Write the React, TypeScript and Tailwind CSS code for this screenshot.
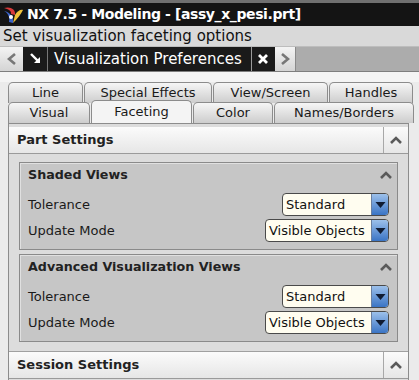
import React from "react";

const font = { fontFamily: '"DejaVu Sans", "Liberation Sans", sans-serif' };

const Chevron = () => (
  <svg width="14" height="10" viewBox="0 0 14 10">
    <path d="M2 8 L7 3 L12 8" fill="none" stroke="#5a5a5a" strokeWidth="2.6" />
  </svg>
);

const NxLogo = () => (
  <svg width="22" height="20" viewBox="0 0 22 20">
    <path d="M2 3 C8 1 14 4 13 10 L9 9 C10 6 6 4 2 3 Z" fill="#d83a3a" />
    <path d="M2 6 C6 8 8 12 7 17 L11 18 C12 12 8 7 2 6 Z" fill="#3b63c9" />
    <path d="M13 10 C15 6 19 4 21 5 C19 9 16 13 11 18 Z" fill="#f0c23a" />
    <circle cx="9" cy="12" r="2" fill="#ffffff" />
  </svg>
);

const Select = ({ label, width }: { label: string; width: string }) => (
  <div
    className={`flex h-[23px] ${width} items-stretch overflow-hidden rounded-[4px] border border-[#4a4a4a] bg-[#fffdf0]`}
  >
    <div className="flex flex-1 items-center whitespace-nowrap pl-[3px] text-[13px] text-[#111]">{label}</div>
    <div className="flex w-[17px] items-center justify-center border-l border-[#6a7fa0] bg-gradient-to-b from-[#9cc0ea] to-[#3a74c4]">
      <svg width="11" height="8" viewBox="0 0 11 8">
        <path d="M0.5 1 L10.5 1 L5.5 7 Z" fill="#101c33" />
      </svg>
    </div>
  </div>
);

const Row = ({ label, select, width }: { label: string; select: string; width: string }) => (
  <div className="flex h-[23px] items-center justify-between pl-[8px] pr-[8px]">
    <span className="whitespace-nowrap text-[13px] text-[#1a1a1a]">{label}</span>
    <Select label={select} width={width} />
  </div>
);

// collapsible group box inside a section
const Group = ({ title }: { title: string }) => (
  <div className="mx-[10px] border border-[#8a8a8a] bg-[#c6c6c6] shadow-[inset_1px_1px_0_#e0e0e0]">
    <div className="flex h-[23px] items-center justify-between pl-[8px] pr-[4px] pt-[1px]">
      <span className="whitespace-nowrap text-[12.7px] font-bold text-[#222]">{title}</span>
      <Chevron />
    </div>
    <div className="flex flex-col gap-[3px] pb-[7px] pt-[7px]">
      <Row label="Tolerance" select="Standard" width="w-[107px]" />
      <Row label="Update Mode" select="Visible Objects" width="w-[124px]" />
    </div>
  </div>
);

const SectionHeader = ({ title }: { title: string }) => (
  <div className="flex h-[27px] items-stretch border-b border-[#9a9a9a] bg-gradient-to-b from-[#fbfbfb] to-[#e6e6e6]">
    <div className="flex flex-1 items-center whitespace-nowrap pl-[8px] text-[13px] font-bold text-[#222]">
      {title}
    </div>
    <div className="flex w-[25px] items-center justify-center border-l border-[#a8a8a8]">
      <Chevron />
    </div>
  </div>
);

const Tab = ({ label, w, active }: { label: string; w: string; active?: boolean }) => (
  <div
    className={`flex ${w} shrink-0 items-center justify-center whitespace-nowrap rounded-t-[5px] border border-b-0 border-[#8c8c8c] text-[13px] text-[#1a1a1a] ${
      active ? "h-[23px] bg-[#f4f4f4]" : "h-[21px] bg-gradient-to-b from-[#f6f6f6] to-[#cdcdcd]"
    }`}
  >
    {label}
  </div>
);

export default function App() {
  return (
    <div className="h-[380px] w-[419px] overflow-hidden bg-[#ebebeb]" style={font}>
      <div className="flex h-[26px] items-center gap-[3px] border-t-[3px] border-[#707070] bg-[#141414] pl-[2px]">
        <NxLogo />
        <span className="whitespace-nowrap text-[14px] font-bold tracking-[-0.4px] text-white">
          NX 7.5 - Modeling - [assy_x_pesi.prt]
        </span>
      </div>
      <div className="flex h-[21px] items-center border-b border-[#bdbdbd] bg-[#d9d9d9] pl-[3px] text-[15px] text-[#111]">
        <span className="whitespace-nowrap">Set visualization faceting options</span>
      </div>
      <div className="flex h-[25px] items-stretch border-b border-[#7e7e7e] bg-[#acacac]">
        <div className="flex w-[23px] items-center justify-center bg-gradient-to-b from-[#f4f4f4] to-[#d4d4d4]">
          <svg width="10" height="12" viewBox="0 0 10 12">
            <path d="M8 1 L2 6 L8 11" fill="none" stroke="#777" strokeWidth="2.6" />
          </svg>
        </div>
        <div className="flex items-center bg-[#1a1a1a] pl-[5px]">
          <svg width="16" height="16" viewBox="0 0 16 16">
            <path d="M3 3 L11 11" stroke="#fff" strokeWidth="2.4" />
            <path d="M6 12 L12 12 L12 6 Z" fill="#fff" />
          </svg>
          <div className="ml-[3px] mr-[6px] h-full w-px bg-[#777]" />
          <span className="whitespace-nowrap pr-[9px] text-[15px] text-white">Visualization Preferences</span>
          <div className="h-full w-px bg-[#9a9a9a]" />
          <div className="flex w-[23px] items-center justify-center">
            <svg width="12" height="12" viewBox="0 0 12 12">
              <path d="M2 2 L10 10 M10 2 L2 10" stroke="#fff" strokeWidth="2.8" />
            </svg>
          </div>
        </div>
        <div className="flex w-[21px] items-center justify-center border-r border-[#8a8a8a] bg-gradient-to-b from-[#f4f4f4] to-[#d4d4d4]">
          <svg width="10" height="12" viewBox="0 0 10 12">
            <path d="M2 1 L8 6 L2 11" fill="none" stroke="#777" strokeWidth="2.6" />
          </svg>
        </div>
      </div>
      <div className="h-[10px] bg-[#f4f4f4]" />
      <div className="pl-[8px] pr-[6px]">
        <div className="flex h-[21px] gap-[1px]">
          <Tab label="Line" w="w-[75px]" />
          <Tab label="Special Effects" w="w-[128px]" />
          <Tab label="View/Screen" w="w-[115px]" />
          <Tab label="Handles" w="w-[84px]" />
        </div>
        <div className="flex h-[20px] items-end gap-[1px]">
          <Tab label="Visual" w="w-[82px]" />
          <Tab label="Faceting" w="w-[101px]" active />
          <Tab label="Color" w="w-[80px]" />
          <Tab label="Names/Borders" w="w-[140px]" />
        </div>
        <div className="mr-[4px] h-[260px] border border-[#8c8c8c] bg-[#dcdcdc] pt-[3px]">
          <SectionHeader title="Part Settings" />
          <div className="flex flex-col gap-[4px] pt-[8px]">
            <Group title="Shaded Views" />
            <Group title="Advanced Visualization Views" />
          </div>
          <div className="mt-[9px] border-t border-[#a0a0a0]">
            <SectionHeader title="Session Settings" />
          </div>
        </div>
      </div>
    </div>
  );
}
